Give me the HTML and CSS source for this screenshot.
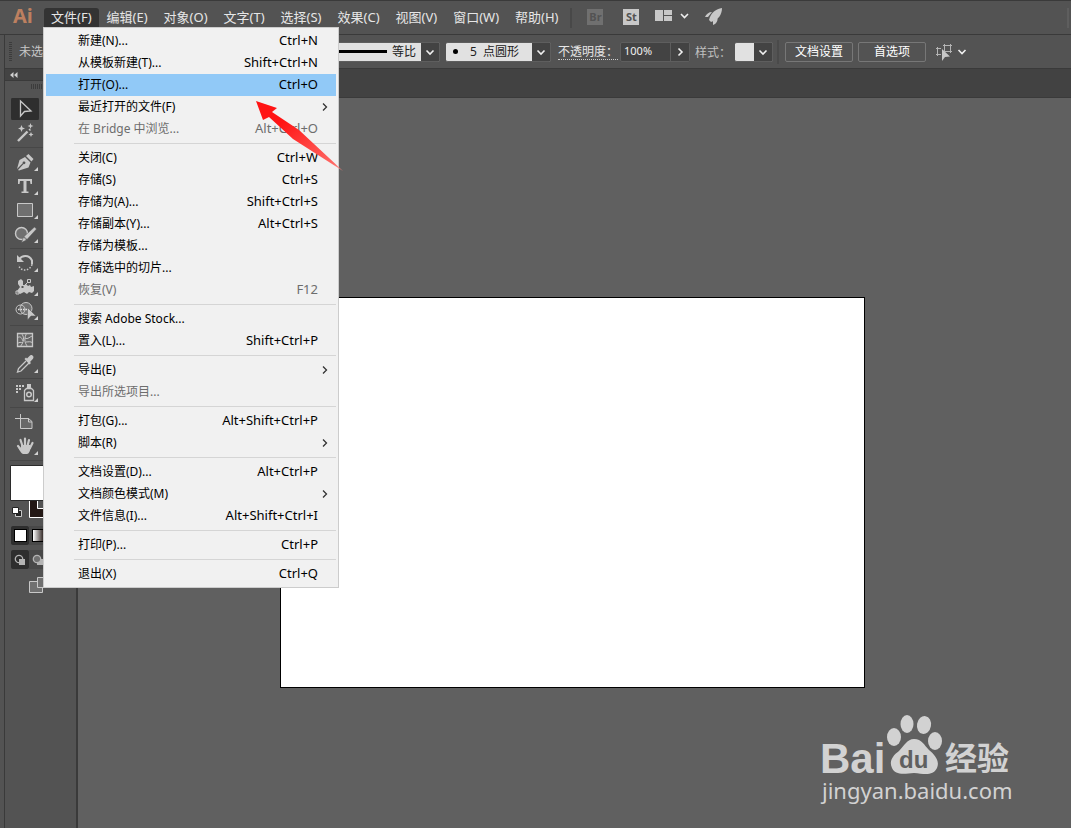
FILE: index.html
```html
<!DOCTYPE html>
<html lang="zh-CN">
  <head>
    <meta charset="utf-8" />
    <title>Adobe Illustrator</title>
    <link rel="stylesheet" href="styles.css">
  </head>

  <body>
    <header class="menubar">
      <span class="logo">Ai</span>
      <nav class="menus">
        <div class="menu-holder">
          <button class="menu-title open" type="button">文件(F)</button>
          <ul class="dropdown">
            <li><button type="button">新建(N)...<kbd>Ctrl+N</kbd></button></li>
            <li><button type="button">从模板新建(T)...<kbd>Shift+Ctrl+N</kbd></button></li>
            <li><button type="button" class="active">打开(O)...<kbd>Ctrl+O</kbd></button></li>
            <li><button type="button">最近打开的文件(F)<svg class="more" viewBox="0 0 6 8"><path d="M1 .5L4.500 4L1 7.500" /></svg></button></li>
            <li><button type="button" disabled>在 Bridge 中浏览...<kbd>Alt+Ctrl+O</kbd></button></li>
            <li class="line"></li>
            <li><button type="button">关闭(C)<kbd>Ctrl+W</kbd></button></li>
            <li><button type="button">存储(S)<kbd>Ctrl+S</kbd></button></li>
            <li><button type="button">存储为(A)...<kbd>Shift+Ctrl+S</kbd></button></li>
            <li><button type="button">存储副本(Y)...<kbd>Alt+Ctrl+S</kbd></button></li>
            <li><button type="button">存储为模板...</button></li>
            <li><button type="button">存储选中的切片...</button></li>
            <li><button type="button" disabled>恢复(V)<kbd>F12</kbd></button></li>
            <li class="line"></li>
            <li><button type="button">搜索 Adobe Stock...</button></li>
            <li><button type="button">置入(L)...<kbd>Shift+Ctrl+P</kbd></button></li>
            <li class="line"></li>
            <li><button type="button">导出(E)<svg class="more" viewBox="0 0 6 8"><path d="M1 .5L4.500 4L1 7.500" /></svg></button></li>
            <li><button type="button" disabled>导出所选项目...</button></li>
            <li class="line"></li>
            <li><button type="button">打包(G)...<kbd>Alt+Shift+Ctrl+P</kbd></button></li>
            <li><button type="button">脚本(R)<svg class="more" viewBox="0 0 6 8"><path d="M1 .5L4.500 4L1 7.500" /></svg></button></li>
            <li class="line"></li>
            <li><button type="button">文档设置(D)...<kbd>Alt+Ctrl+P</kbd></button></li>
            <li><button type="button">文档颜色模式(M)<svg class="more" viewBox="0 0 6 8"><path d="M1 .5L4.500 4L1 7.500" /></svg></button></li>
            <li><button type="button">文件信息(I)...<kbd>Alt+Shift+Ctrl+I</kbd></button></li>
            <li class="line"></li>
            <li><button type="button">打印(P)...<kbd>Ctrl+P</kbd></button></li>
            <li class="line"></li>
            <li><button type="button">退出(X)<kbd>Ctrl+Q</kbd></button></li>
          </ul>
          <svg class="pointer" viewBox="0 0 88 71">
            <defs>
              <linearGradient id="red" x1="0" y1="0" x2="1" y2="1">
                <stop offset="0.3" stop-color="#ff1414" />
                <stop offset="0.9" stop-color="#ff6a66" />
                <stop offset="1" stop-color="#ff8a86" stop-opacity="0.7" />
              </linearGradient>
            </defs>
            <path fill="url(#red)" d="M1 1L22 8L17 12L44 30L88 71L38 39L14 17L8 20Z" />
          </svg>
        </div>
        <button class="menu-title" type="button">编辑(E)</button>
        <button class="menu-title" type="button">对象(O)</button>
        <button class="menu-title" type="button">文字(T)</button>
        <button class="menu-title" type="button">选择(S)</button>
        <button class="menu-title" type="button">效果(C)</button>
        <button class="menu-title" type="button">视图(V)</button>
        <button class="menu-title" type="button">窗口(W)</button>
        <button class="menu-title" type="button">帮助(H)</button>
      </nav>
      <div class="apps">
        <button class="app dim" type="button">Br</button>
        <button class="app" type="button">St</button>
        <button class="layout" type="button" aria-label="排列文档">
          <svg width="34" height="14" viewBox="0 0 34 14">
            <path fill="#c8c8c8" d="M0 0h8v11H0zM9 0h8v5H9zM9 6h8v5H9z" />
            <path class="chev" d="M26 4l3.500 3.500L33 4" />
          </svg>
        </button>
        <button type="button" aria-label="GPU 性能">
          <svg width="18" height="18" viewBox="0 0 18 18" fill="#c8c8c8">
            <path d="M17 0C11 1 6 4 4 12L6 14C13 12 17 7 17 0Z" />
            <path d="M0 9C1 6 4 4 7 4L3 9ZM8 17C11 16 13 13 12.500 10L8 13Z" />
          </svg>
        </button>
      </div>
      <span class="end-grip"></span>
    </header>

    <section class="controls">
      <div class="status">
        <span class="grip"></span>
        <span>未选</span>
      </div>
      <div class="combo profile">
        <span class="stroke-line"></span>
        <select aria-label="宽度配置文件"><option>等比</option></select>
        <svg class="arrow" viewBox="0 0 18 18"><path class="chev" d="M5.500 7.500L9 11l3.500-3.500" /></svg>
      </div>
      <div class="combo brush">
        <span class="dot"></span>
        <select aria-label="画笔定义"><option>5 &nbsp;点圆形</option></select>
        <svg class="arrow" viewBox="0 0 18 18"><path class="chev" d="M5.500 7.500L9 11l3.500-3.500" /></svg>
      </div>
      <label class="opacity" for="opacity">不透明度：</label>
      <div class="combo dark">
        <input type="text" id="opacity" value="100%" />
        <svg class="arrow" viewBox="0 0 18 18"><path class="chev" d="M7.500 5.500L11 9l-3.500 3.500" /></svg>
      </div>
      <span class="style-label">样式：</span>
      <button class="combo style" type="button" aria-label="图形样式">
        <span class="sample"></span>
        <svg class="arrow" viewBox="0 0 18 18"><path class="chev" d="M5.500 7.500L9 11l3.500-3.500" /></svg>
      </button>
      <span class="bar"></span>
      <button class="push" type="button">文档设置</button>
      <button class="push" type="button">首选项</button>
      <button class="similar" type="button" aria-label="选择类似的对象">
        <svg width="32" height="18" viewBox="0 0 32 18">
          <path fill="none" stroke="#b4b4b4" d="M6 5.500H2.500v6H6M1 5.500h3M1 11.500h3M2.500 4v3M2.500 10v3M9.500 2.500h6v6h-6zM8 2.500h2M15 2.500h2M15 8.500h2M9.500 1v2M15.500 1v2M15.500 8v2" />
          <path fill="#c8c8c8" d="M7 6v12l3-4 5-.5z" />
          <path class="chev" d="M23.500 7l3.500 3.500L30.500 7" />
        </svg>
      </button>
    </section>

    <div class="workspace">
      <aside class="toolbox">
        <div class="toolbox-head">
          <svg width="8" height="6" viewBox="0 0 8 6"><path fill="#d0d0d0" d="M3.500 0v6L0 3zM7.500 0v6L4 3z" /></svg>
        </div>
        <div class="toolbox-grip"></div>

        <div class="tools">
          <button class="tool selected" type="button" aria-label="选择工具">
            <svg viewBox="0 0 28 24"><path fill="none" stroke="#c8c8c8" stroke-width="1.300" d="M9.500 4v15l4-4.500 6.500-.5z" /></svg>
          </button>
          <button class="tool" type="button" aria-label="魔棒工具">
            <svg viewBox="0 0 28 24">
              <path stroke="#c8c8c8" stroke-width="2.400" d="M7 20L16.500 10.500" />
              <path fill="#c8c8c8" d="M17.500 8.500l1-1 1.500 1.500-1 1zM10.500 4l1 2.500 2.500 1-2.500 1-1 2.500-1-2.500L7 7.500l2.500-1zM19.500 2l.8 2.200 2.200.8-2.200.8-.8 2.200-.8-2.200L16.500 5l2.200-.8zM20 11l.8 1.700 1.700.8-1.700.8-.8 1.700-.8-1.700-1.700-.8 1.700-.8z" />
            </svg>
          </button>
          <hr />
          <button class="tool" type="button" aria-label="钢笔工具">
            <svg viewBox="0 0 28 24">
              <path fill="#c8c8c8" d="M17.500 4l5 5-2 2.500-5.500-5.500zM14 7l5.500 5.500-2 5L8 20.500 7 20l5.500-6-.8-.8L6 19 8.500 10z" />
              <circle cx="13" cy="12.800" r="1.400" fill="#535353" />
              <path class="fly" d="M27 17v4h-4z" />
            </svg>
          </button>
          <button class="tool" type="button" aria-label="文字工具">
            <svg viewBox="0 0 28 24">
              <path fill="#c8c8c8" d="M7 5h14v5h-1.500l-.5-3h-3.500v10.500h2V19h-7v-1.500h2V7H9l-.5 3H7z" />
              <path class="fly" d="M27 17v4h-4z" />
            </svg>
          </button>
          <button class="tool" type="button" aria-label="矩形工具">
            <svg viewBox="0 0 28 24">
              <path fill="#707070" stroke="#c8c8c8" d="M6.500 5.500h15v13h-15z" />
              <path class="fly" d="M27 17v4h-4z" />
            </svg>
          </button>
          <button class="tool" type="button" aria-label="Shaper 工具">
            <svg viewBox="0 0 28 24">
              <circle cx="10.500" cy="11.500" r="6" fill="#707070" stroke="#c8c8c8" stroke-width="1.400" />
              <path fill="#c8c8c8" stroke="#535353" stroke-width=".5" d="M23.500 5l2 2L16 17.500l-3-3zM12.500 15l3 3-5 2.500z" />
              <path class="fly" d="M27 17v4h-4z" />
            </svg>
          </button>
          <hr />
          <button class="tool" type="button" aria-label="旋转工具">
            <svg viewBox="0 0 28 24" fill="none" stroke="#c8c8c8">
              <path stroke-width="2" d="M8 8.500C11 4 18 3.500 21 9.500v4" />
              <path stroke-width="1.500" stroke-dasharray="1.500 1.500" d="M21 13.500C19 20 10 21.500 7.500 14" />
              <path fill="#c8c8c8" stroke="none" d="M6 4v7h7z" />
              <path class="fly" d="M27 17v4h-4z" />
            </svg>
          </button>
          <button class="tool" type="button" aria-label="宽度工具">
            <svg viewBox="0 0 28 24">
              <path fill="#c8c8c8" d="M7 6l3-2 2 2v5l3-2 2 2 2-1 1 2 3-1v5l-2 2-3-1-2 2-3-2-4 2-3-3 3-4-2-3z" />
              <path fill="none" stroke="#c8c8c8" d="M6.500 17.500L12 12l6-6M5 16h3v3H5z" />
              <path fill="#535353" stroke="#c8c8c8" d="M10 10.500h3v3h-3zM16.500 4.500h3v3h-3z" />
              <path class="fly" d="M27 17v4h-4z" />
            </svg>
          </button>
          <button class="tool" type="button" aria-label="形状生成器工具">
            <svg viewBox="0 0 28 24">
              <circle cx="15" cy="9.500" r="6" fill="#707070" stroke="#c8c8c8" />
              <circle cx="9.500" cy="10.500" r="4.500" fill="none" stroke="#c8c8c8" />
              <path stroke="#e0e0e0" stroke-width="1.500" stroke-dasharray="1.500 1" d="M7 10.500h9" />
              <path fill="#c8c8c8" stroke="#535353" stroke-width=".5" d="M16.500 8.500v12.500l3.500-4h5z" />
              <path class="fly" d="M27 17v4h-4z" />
            </svg>
          </button>
          <hr />
          <button class="tool" type="button" aria-label="网格工具">
            <svg viewBox="0 0 28 24" fill="none" stroke="#c8c8c8">
              <path fill="#666" stroke-width="1.300" d="M6.500 5.500h15v13h-15z" />
              <path d="M10 5c4 4 3 9-1 14M16 5c-3 4-3 10 1 14M6 10c4-3 5 1 6 3M6 16c2-2 4-2 6-1M14 10c3 2 5-2 8-2M15 14c3 0 4-1 7 1" />
            </svg>
          </button>
          <button class="tool" type="button" aria-label="吸管工具">
            <svg viewBox="0 0 28 24">
              <path fill="none" stroke="#c8c8c8" stroke-width="1.300" d="M15 9L7.500 16.500l-1 3.500 3.500-1L18 11" />
              <path fill="#c8c8c8" d="M13.500 7l1.500-1.500 1 1L18.500 4c2-2.500 5.500.8 3.300 3L19 10l1 1-1.500 1.500z" />
              <path class="fly" d="M27 17v4h-4z" />
            </svg>
          </button>
          <hr />
          <button class="tool" type="button" aria-label="符号喷枪工具">
            <svg viewBox="0 0 28 24">
              <path fill="#c8c8c8" d="M5 4h2v2H5zM8 4h2v2H8zM11 4h2v2h-2zM5 7h2v2H5zM8 7h2v2H8zM5 10h2v2H5zM16 3h4v4h-4z" />
              <path fill="none" stroke="#c8c8c8" stroke-width="1.300" d="M13.500 9.500l2-2h5l2 2v10h-9z" />
              <circle cx="18" cy="13.500" r="2.300" fill="none" stroke="#c8c8c8" stroke-width="1.500" />
              <path class="fly" d="M27 17v4h-4z" />
            </svg>
          </button>
          <hr />
          <button class="tool" type="button" aria-label="画板工具">
            <svg viewBox="0 0 28 24">
              <path fill="#686868" stroke="#c8c8c8" d="M9.500 8.500h8l3.500 3v7H9.500z" />
              <path stroke="#c8c8c8" d="M9.500 4v5M4 8.500h6" />
              <path fill="none" stroke="#c8c8c8" d="M17.500 8v4H21" />
            </svg>
          </button>
          <button class="tool" type="button" aria-label="抓手工具">
            <svg viewBox="0 0 28 24">
              <path fill="none" stroke="#c8c8c8" stroke-width="2.200" stroke-linecap="round" d="M11.500 12L9.500 6M14 11V4.500M16.500 12L18 6M19 14l2.500-5M10.500 16L7 12" />
              <path fill="#c8c8c8" d="M10 11l9 0 1 2c-1 4-2 7-4 7h-4c-1 0-3-3-5-6l3 1z" />
              <path class="fly" d="M27 17v4h-4z" />
            </svg>
          </button>
          <hr />
        </div>

        <svg class="colors" viewBox="0 0 56 56">
          <path fill="#231815" stroke="#fff" d="M20.500 20.500h33v33h-33z" />
          <path fill="#535353" stroke="#fff" d="M28.500 28.500h17v16h-17z" />
          <path fill="#fff" stroke="#2b2b2b" d="M1.500 1.500h34v35h-34z" />
          <path fill="#222" stroke="#c8c8c8" d="M6.500 46.500h6v6h-6z" />
          <path fill="#fff" stroke="#222" d="M3.500 43.500h6v6h-6z" />
        </svg>

        <div class="modes">
          <button class="on" type="button" aria-label="颜色"><i class="solid"></i></button>
          <button type="button" aria-label="渐变"><i class="gradient"></i></button>
        </div>
        <div class="modes">
          <button class="on" type="button" aria-label="正常绘图">
            <svg width="12" height="12" viewBox="0 0 12 12"><circle cx="5" cy="5" r="3.700" fill="none" stroke="#b4b4b4" stroke-width="1.300" /><path fill="#b4b4b4" d="M5 5h6v6H5z" /></svg>
          </button>
          <button type="button" aria-label="背面绘图">
            <svg width="12" height="12" viewBox="0 0 12 12"><path fill="#b4b4b4" d="M5 5h6v6H5z" /><circle cx="5" cy="5" r="3.700" fill="#707070" stroke="#b4b4b4" stroke-width="1.300" /></svg>
          </button>
        </div>
        <button class="screen" type="button" aria-label="更改屏幕模式">
          <svg width="22" height="16" viewBox="0 0 22 16" fill="#707070" stroke="#c8c8c8">
            <path d="M.5 4.500h13v11H.5z" />
            <path d="M8.500 .5h13v10h-13z" />
          </svg>
        </button>
      </aside>

      <main class="document">
        <div class="tabs"></div>
        <div class="canvas">
          <div class="artboard"></div>
        </div>
        <svg class="watermark" viewBox="0 0 200 100">
          <g fill="#d2d2d2">
            <text class="bai" x="5" y="63">Bai</text>
            <ellipse cx="79" cy="27" rx="7" ry="9" />
            <ellipse cx="92" cy="14" rx="6.500" ry="9" />
            <ellipse cx="109" cy="15" rx="7" ry="9" transform="rotate(10 109 15)" />
            <ellipse cx="120" cy="31" rx="7" ry="9" />
            <path d="M99 29C92 29 89 36 84 41C77 46 74 52 77 58C80 65 88 64 99 63C110 64 118 66 122 58C125 51 120 45 114 40C109 35 107 29 99 29Z" />
            <text class="jingyan" x="130" y="60">经验</text>
            <text class="url" x="7" y="89">jingyan.baidu.com</text>
          </g>
          <text class="du" x="84" y="58">du</text>
        </svg>
      </main>
    </div>
  </body>
</html>
```
FILE: styles.css
```css
* {
  box-sizing: border-box;
}

body {
  margin: 0;
  display: flex;
  flex-direction: column;
  min-height: 100vh;
  font-family: "Noto Sans", "Noto Sans CJK SC", sans-serif;
  font-size: 12px;
  color: #e6e6e6;
  background-color: #535353;
}

button,
select,
input {
  margin: 0;
  padding: 0;
  border: none;
  font: inherit;
  color: inherit;
  background: none;
}

svg {
  display: block;
}

.chev {
  fill: none;
  stroke: #f0f0f0;
  stroke-width: 1.6;
}

/* menu bar */
.menubar {
  display: flex;
  align-items: center;
  height: 35px;
  padding-right: 2px;
  border-top: 1px solid #3a3a3a;
  border-bottom: 1px solid #3a3a3a;
}

.logo {
  width: 44px;
  padding: 0 0 3px 13px;
  font-size: 20px;
  font-weight: bold;
  line-height: 28px;
  color: #bd8060;
}

.menus {
  display: flex;
}

.menu-holder {
  position: relative;
}

.menu-title {
  height: 20px;
  padding: 0 8px 2px;
  font-size: 13px;
  line-height: 18px;
  white-space: nowrap;
}

.menu-title.open {
  padding: 0 7px 2px;
  border-radius: 3px 3px 0 0;
  background-color: #333;
}

.dropdown {
  position: absolute;
  z-index: 2;
  top: 19px;
  left: -1px;
  width: 296px;
  margin: 0;
  padding: 2px;
  list-style: none;
  border: 1px solid #ccc;
  background-color: #f1f1f1;
}

.dropdown button {
  display: flex;
  align-items: flex-start;
  justify-content: space-between;
  width: 100%;
  height: 22px;
  padding: 0 18px 0 32px;
  line-height: 21px;
  color: #000;
  white-space: nowrap;
}

.dropdown .active {
  background-color: #91c9f7;
}

.dropdown button:disabled {
  color: #6d6d6d;
}

.dropdown kbd {
  font-family: inherit;
  font-size: 13px;
}

.dropdown .line {
  height: 7px;
  margin-left: 28px;
  border-top: 3px solid #f1f1f1;
  background: linear-gradient(#d5d5d5 1px, #f1f1f1 1px);
}

.more {
  align-self: center;
  width: 6px;
  height: 8px;
  margin-right: -10px;
  fill: none;
  stroke: #333;
  stroke-width: 1.3;
}

.pointer {
  position: absolute;
  z-index: 3;
  top: 92px;
  left: 211px;
  width: 88px;
  height: 71px;
}

.apps {
  display: flex;
  align-items: center;
  gap: 20px;
  height: 20px;
  margin-left: 4px;
  padding: 0 0 1px 15px;
  border-left: 2px solid #484848;
}

.app {
  width: 16px;
  height: 16px;
  font-size: 11px;
  font-weight: bold;
  line-height: 16px;
  color: #535353;
  background-color: #c8c8c8;
}

.app.dim {
  background-color: #707070;
}

.layout {
  margin: 0 -4px;
}

.end-grip {
  width: 2px;
  height: 20px;
  margin-left: auto;
  background-color: #5e5e5e;
}

/* control bar */
.controls {
  display: flex;
  align-items: center;
  height: 34px;
  margin-left: 4px;
  border-left: 1px solid #3a3a3a;
  border-bottom: 1px solid #3a3a3a;
}

.status {
  display: flex;
  align-items: center;
  gap: 7px;
  width: 313px;
  padding-left: 4px;
  line-height: 16px;
  color: #c8c8c8;
}

.grip {
  width: 3px;
  height: 20px;
  background: repeating-linear-gradient(#3c3c3c 0 1px, #535353 1px 2px);
}

.combo {
  display: flex;
  align-items: center;
  height: 20px;
  border: 1px solid #5e5e5e;
  border-left: none;
  border-radius: 2px;
  color: #222;
  background-color: #e1e1e1;
}

.combo select {
  height: 18px;
  appearance: none;
}

.arrow {
  width: 18px;
  height: 18px;
  background-color: #434343;
}

.profile {
  width: 122px;
  margin-right: 6px;
}

.stroke-line {
  flex: 1;
  height: 3px;
  margin-right: 5px;
  background-color: #000;
}

.profile select {
  width: 29px;
}

.brush {
  width: 105px;
  margin-right: 7px;
}

.brush .dot {
  width: 5px;
  height: 5px;
  margin: 0 12px 0 7px;
  border-radius: 50%;
  background-color: #000;
}

.brush select {
  flex: 1;
  min-width: 0;
}

.opacity {
  margin-right: 2px;
  line-height: 15px;
  border-bottom: 1px dotted #ccc;
}

.dark {
  width: 70px;
  margin-right: 5px;
  border-left: 1px solid #5e5e5e;
  color: #f0f0f0;
  background-color: #434343;
}

.dark input {
  flex: 1;
  min-width: 0;
  height: 18px;
  padding: 0 0 2px 3px;
  font-size: 11px;
}

.dark .arrow {
  width: 19px;
  border-left: 1px solid #5e5e5e;
}

.style-label {
  width: 40px;
  color: #c0c0c0;
}

.sample {
  width: 19px;
  height: 18px;
}

.bar {
  width: 2px;
  height: 24px;
  margin: 0 6px 0 4px;
  background-color: #4a4a4a;
}

.push {
  width: 68px;
  height: 20px;
  margin-right: 5px;
  border: 1px solid #777;
  border-radius: 2px;
  line-height: 18px;
  color: #fff;
}

.similar {
  margin-left: 4px;
}

/* toolbox */
.workspace {
  display: flex;
  flex: 1;
}

.toolbox {
  width: 74px;
  margin-left: 4px;
  border-left: 1px solid #3a3a3a;
  border-right: 2px solid #3a3a3a;
}

.toolbox-head {
  height: 12px;
  padding: 3px 5px;
  border-bottom: 1px solid #3a3a3a;
  background-color: #434343;
}

.toolbox-grip {
  width: 20px;
  height: 5px;
  margin: 3px auto 8px;
  background: repeating-linear-gradient(90deg, #3c3c3c 0 1px, #535353 1px 2px);
}

.tools {
  display: flex;
  flex-direction: column;
  padding-left: 5px;
}

.tool {
  width: 28px;
  height: 24px;
  margin-left: 1px;
}

.tool.selected {
  border-radius: 3px;
  background: linear-gradient(#535353 1px, #2e2e2e 1px, #2e2e2e 23px, #535353 23px);
}

.tool .fly {
  fill: #d2d2d2;
  stroke: none;
}

.tools hr {
  width: 100%;
  height: 5px;
  margin: 0;
  border: none;
  background: linear-gradient(#535353 2px, #474747 2px, #474747 3px, #535353 3px);
}

.colors {
  width: 56px;
  height: 56px;
  margin: 1px 0 6px 4px;
}

.modes {
  display: flex;
  height: 20px;
  margin: 0 0 4px 6px;
}

.modes button {
  display: flex;
  align-items: center;
  justify-content: center;
  width: 18px;
  height: 19px;
  background-color: #484848;
}

.modes .on {
  border-radius: 2px;
  background-color: #2e2e2e;
}

.modes i {
  width: 13px;
  height: 13px;
  border: 1px solid #000;
  background-color: #fff;
}

.modes .gradient {
  background: linear-gradient(90deg, #fff, #231815);
}

.screen {
  margin: 3px 0 0 24px;
}

/* document */
.document {
  position: relative;
  flex: 1;
  background-color: #606060;
}

.tabs {
  height: 29px;
  border-bottom: 1px solid #3a3a3a;
  background-color: #424242;
}

.canvas {
  padding: 199px 206px 0 202px;
}

.artboard {
  aspect-ratio: 585 / 391;
  border: 1px solid #000;
  background-color: #fff;
}

.watermark {
  position: absolute;
  right: 56px;
  bottom: 18px;
  width: 200px;
  height: 100px;
  overflow: visible;
}

.bai,
.du {
  font-family: "Liberation Sans", sans-serif;
  font-size: 42px;
  font-weight: bold;
}

.du {
  font-size: 24px;
  fill: #606060;
}

.jingyan {
  font-family: "Noto Sans CJK SC", sans-serif;
  font-size: 32px;
  font-weight: bold;
}

.url {
  font-size: 22px;
}
```
